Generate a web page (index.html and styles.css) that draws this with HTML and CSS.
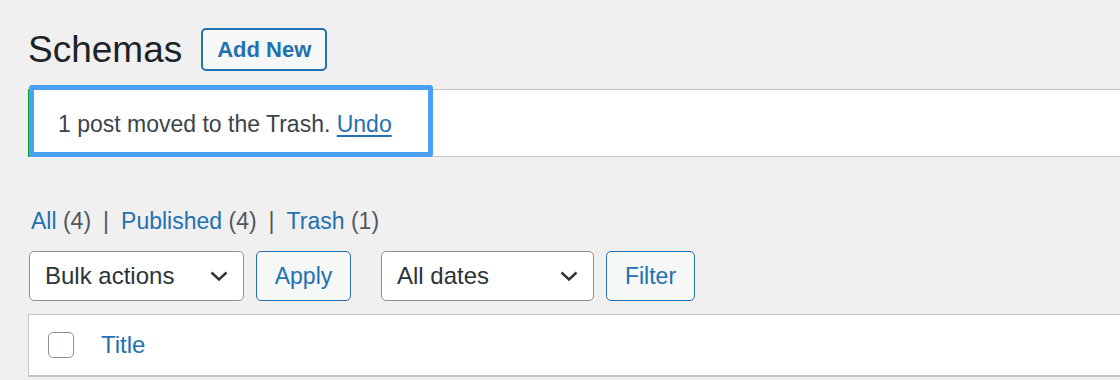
FILE: index.html
```html
<!DOCTYPE html>
<html lang="en">

<head>
  <meta charset="UTF-8">
  <meta name="viewport" content="width=device-width, initial-scale=1.0">
  <title>Schemas</title>
  <link rel="stylesheet" href="styles.css">
</head>

<body>
  <div class="wrap">
    <!-- Page title -->
    <div class="title-row">
      <h1>Schemas</h1>
      <a class="add-new" href="#">Add New</a>
    </div>

    <!-- Notice with highlight frame -->
    <div class="notice">
      <p>1 post moved to the Trash. <a href="#">Undo</a></p>
      <span class="highlight"></span>
    </div>

    <!-- Status links -->
    <ul class="subsubsub">
      <li><a href="#">All</a> <span class="count">(4)</span></li>
      <li class="sep">|</li>
      <li><a href="#">Published</a> <span class="count">(4)</span></li>
      <li class="sep">|</li>
      <li><a href="#">Trash</a> <span class="count">(1)</span></li>
    </ul>

    <!-- Table navigation -->
    <div class="tablenav">
      <div class="select bulk">
        <span>Bulk actions</span>
        <svg width="18" height="10" viewBox="0 0 18 10"><polyline points="1.5,1.5 9,8.5 16.5,1.5" fill="none" stroke="#2c3338" stroke-width="2.4"/></svg>
      </div>
      <button class="btn apply">Apply</button>
      <div class="select dates">
        <span>All dates</span>
        <svg width="18" height="10" viewBox="0 0 18 10"><polyline points="1.5,1.5 9,8.5 16.5,1.5" fill="none" stroke="#2c3338" stroke-width="2.4"/></svg>
      </div>
      <button class="btn filter">Filter</button>
    </div>

    <!-- Posts table -->
    <div class="table">
      <div class="table-head">
        <span class="checkbox"></span>
        <a href="#">Title</a>
      </div>
    </div>
  </div>
</body>

</html>
```

FILE: styles.css
```css
body {
  margin: 0;
  background-color: #f0f0f1;
  font-family: "Liberation Sans", Arial, sans-serif;
  color: #3c434a;
  overflow: hidden;
}

a {
  color: #2271b1;
  text-decoration: none;
}

.wrap {
  padding-left: 28px;
  margin-right: -20px;
}

.title-row {
  display: flex;
  align-items: center;
  gap: 19px;
  padding-top: 28px;
}

h1 {
  margin: 0;
  font-size: 37px;
  font-weight: 400;
  line-height: 43px;
  color: #1d2327;
}

.add-new {
  display: flex;
  align-items: center;
  height: 43px;
  box-sizing: border-box;
  padding: 0 14px;
  border: 2px solid #2271b1;
  border-radius: 5px;
  background-color: #f6f7f7;
  font-size: 22px;
  font-weight: 700;
}

/* Notice */
.notice {
  position: relative;
  margin-top: 18px;
  height: 68px;
  box-sizing: border-box;
  background-color: #fff;
  border: 1px solid #c3c4c7;
  border-left: 4px solid #00a32a;
  display: flex;
  align-items: center;
  padding-left: 26px;
}

.notice p {
  margin: 0;
  font-size: 23px;
  padding-top: 2px;
}

.notice a {
  text-decoration: underline;
  text-underline-offset: 3px;
}

.highlight {
  position: absolute;
  left: -3px;
  top: -5px;
  bottom: -1px;
  width: 404px;
  border: 5.5px solid #4aa0f7;
  border-radius: 3px;
  box-sizing: border-box;
}

/* Status links */
.subsubsub {
  list-style-type: none;
  margin: 51px 0 0 3px;
  padding: 0;
  display: flex;
  gap: 12px;
  font-size: 23px;
  line-height: 26px;
}

.count,
.sep {
  color: #50575e;
}

/* Table navigation */
.tablenav {
  display: flex;
  align-items: center;
  gap: 12px;
  margin-top: 17px;
  margin-left: 1px;
}

.select {
  display: flex;
  align-items: center;
  justify-content: space-between;
  height: 50px;
  box-sizing: border-box;
  padding: 0 15px 0 15px;
  border: 1.5px solid #8c8f94;
  border-radius: 5px;
  background-color: #fff;
  font-size: 24px;
  color: #2c3338;
}

.bulk {
  width: 215px;
}

.dates {
  width: 213px;
  margin-left: 18px;
}

.btn {
  height: 50px;
  padding: 0;
  border: 1.5px solid #2271b1;
  border-radius: 5px;
  background-color: #f6f7f7;
  color: #2271b1;
  font-family: inherit;
  font-size: 23px;
}

.apply {
  width: 95px;
}

.filter {
  width: 89px;
}

/* Table */
.table {
  margin-top: 13px;
  background-color: #fff;
  border: 1px solid #c3c4c7;
}

.table-head {
  display: flex;
  align-items: center;
  height: 60px;
  padding-left: 19px;
  border-bottom: 1px solid #c3c4c7;
}

.checkbox {
  width: 26px;
  height: 26px;
  box-sizing: border-box;
  border: 1.5px solid #8c8f94;
  border-radius: 5px;
  margin-right: 27px;
}

.table-head a {
  font-size: 24px;
}
```
